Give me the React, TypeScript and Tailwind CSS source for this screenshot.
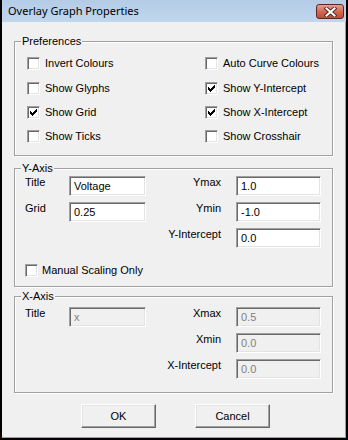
import React from "react";

const sunken =
  "border border-t-[#a0a0a0] border-l-[#a0a0a0] border-r-white border-b-white shadow-[inset_1px_1px_0_#696969,inset_-1px_-1px_0_#e3e3e3]";

function Check({ checked }: { checked?: boolean }) {
  return (
    <span className={`flex h-[13px] w-[13px] shrink-0 items-center justify-center bg-white ${sunken}`}>
      {checked && (
        <svg width="7" height="7" viewBox="0 0 7 7" shapeRendering="crispEdges">
          <path d="M0 2 L2 4 L7 -1 L7 2 L2 7 L0 5 Z" fill="#000" />
        </svg>
      )}
    </span>
  );
}

function CheckRow({ label, checked, className = "" }: { label: string; checked?: boolean; className?: string }) {
  return (
    <div className={`flex h-[13px] items-center ${className}`}>
      <Check checked={checked} />
      <span className="ml-[5px] whitespace-nowrap leading-[13px]">{label}</span>
    </div>
  );
}

function Field({ value, disabled }: { value: string; disabled?: boolean }) {
  return (
    <div
      className={`flex h-[20px] items-center pl-[4px] leading-[13px] ${sunken} ${
        disabled ? "bg-[#f0f0f0] text-[#808080]" : "bg-white text-black"
      }`}
    >
      {value}
    </div>
  );
}

function Group({ label, className = "", children }: { label: string; className?: string; children: React.ReactNode }) {
  return (
    <div
      className={`flex w-[319px] flex-col border border-[#a0a0a0] shadow-[inset_1px_1px_0_#fff,1px_1px_0_#fff] ${className}`}
    >
      <div className="-mt-[7px] ml-[6px] w-fit bg-[#f0f0f0] px-[1px] leading-[13px]">{label}</div>
      {children}
    </div>
  );
}

function AxisGrid({ rows, className = "" }: { rows: [string, string | null, string, string][]; className?: string }) {
  const disabled = rows[0][1] === "x";
  return (
    <div className={`grid grid-cols-[44px_77px_1fr_85px] auto-rows-[20px] gap-y-[6px] pl-[10px] pr-[11px] ${className}`}>
      {rows.map(([l, v, r, rv]) => (
        <React.Fragment key={r}>
          <span className="leading-[13px]">{l}</span>
          {v !== null ? <Field value={v} disabled={disabled} /> : <span />}
          <span className="pr-[15px] text-right leading-[13px]">{r}</span>
          <Field value={rv} disabled={disabled} />
        </React.Fragment>
      ))}
    </div>
  );
}

function Button({ children }: { children: React.ReactNode }) {
  return (
    <button className="flex h-[24px] w-[75px] items-center justify-center border border-t-white border-l-white border-r-[#696969] border-b-[#696969] bg-[#f0f0f0] shadow-[inset_-1px_-1px_0_#a0a0a0,inset_1px_1px_0_#e3e3e3] leading-[13px]">
      {children}
    </button>
  );
}

export default function App() {
  return (
    <div className="flex h-[440px] w-[348px] flex-col border-x-2 border-b-2 border-black bg-[#f0f0f0] font-['Liberation_Sans',Arial,sans-serif] text-[11px] text-black">
      {/* Title bar */}
      <div className="flex h-[22px] shrink-0 items-start justify-between bg-gradient-to-b from-[#b3cbe5] to-[#c0d6ed]">
        <span className="pl-[6px] pt-[3px] font-['Noto_Sans',sans-serif] text-[11px] leading-[16px]">
          Overlay Graph Properties
        </span>
        <div className="mr-[2px] mt-[4px] flex h-[15px] w-[28px] items-center justify-center rounded-[3px] border border-[#5e2727] bg-gradient-to-b from-[#e3a08f] via-[#d06a55] to-[#c14a35]">
          <svg width="13" height="10" viewBox="0 0 13 10">
            <path d="M2.5 1.5 L10.5 8.5 M10.5 1.5 L2.5 8.5" stroke="#5a2a26" strokeWidth="4" strokeLinecap="square" />
            <path d="M2.5 1.5 L10.5 8.5 M10.5 1.5 L2.5 8.5" stroke="#fff" strokeWidth="2" strokeLinecap="square" />
          </svg>
        </div>
      </div>

      {/* Body */}
      <div className="flex flex-1 flex-col border-b border-r border-[#38c1e9] pl-[12px]">
        <Group label="Preferences" className="mt-[19px]">
          <div className="mt-[9px] flex flex-col pb-[12px] pl-[12px]">
            {[
              ["Invert Colours", false, "Auto Curve Colours", false, ""],
              ["Show Glyphs", false, "Show Y-Intercept", true, "mt-[12px]"],
              ["Show Grid", true, "Show X-Intercept", true, "mt-[11px]"],
              ["Show Ticks", false, "Show Crosshair", false, "mt-[11px]"],
            ].map(([a, ac, b, bc, mt]) => (
              <div key={a as string} className={`grid grid-cols-[178px_1fr] ${mt}`}>
                <CheckRow label={a as string} checked={ac as boolean} />
                <CheckRow label={b as string} checked={bc as boolean} />
              </div>
            ))}
          </div>
        </Group>

        <Group label="Y-Axis" className="mt-[12px]">
          <AxisGrid
            className="mt-[1px]"
            rows={[
              ["Title", "Voltage", "Ymax", "1.0"],
              ["Grid", "0.25", "Ymin", "-1.0"],
              ["", null, "Y-Intercept", "0.0"],
            ]}
          />
          <CheckRow label="Manual Scaling Only" className="mb-[9px] ml-[10px] mt-[16px] [&>span:last-child]:ml-[4px]" />
        </Group>

        <Group label="X-Axis" className="mt-[9px]">
          <AxisGrid
            className="mb-[13px] mt-[4px]"
            rows={[
              ["Title", "x", "Xmax", "0.5"],
              ["", null, "Xmin", "0.0"],
              ["", null, "X-Intercept", "0.0"],
            ]}
          />
        </Group>

        <div className="mt-[11px] flex gap-[39px] pl-[67px]">
          <Button>OK</Button>
          <Button>Cancel</Button>
        </div>
      </div>
    </div>
  );
}
